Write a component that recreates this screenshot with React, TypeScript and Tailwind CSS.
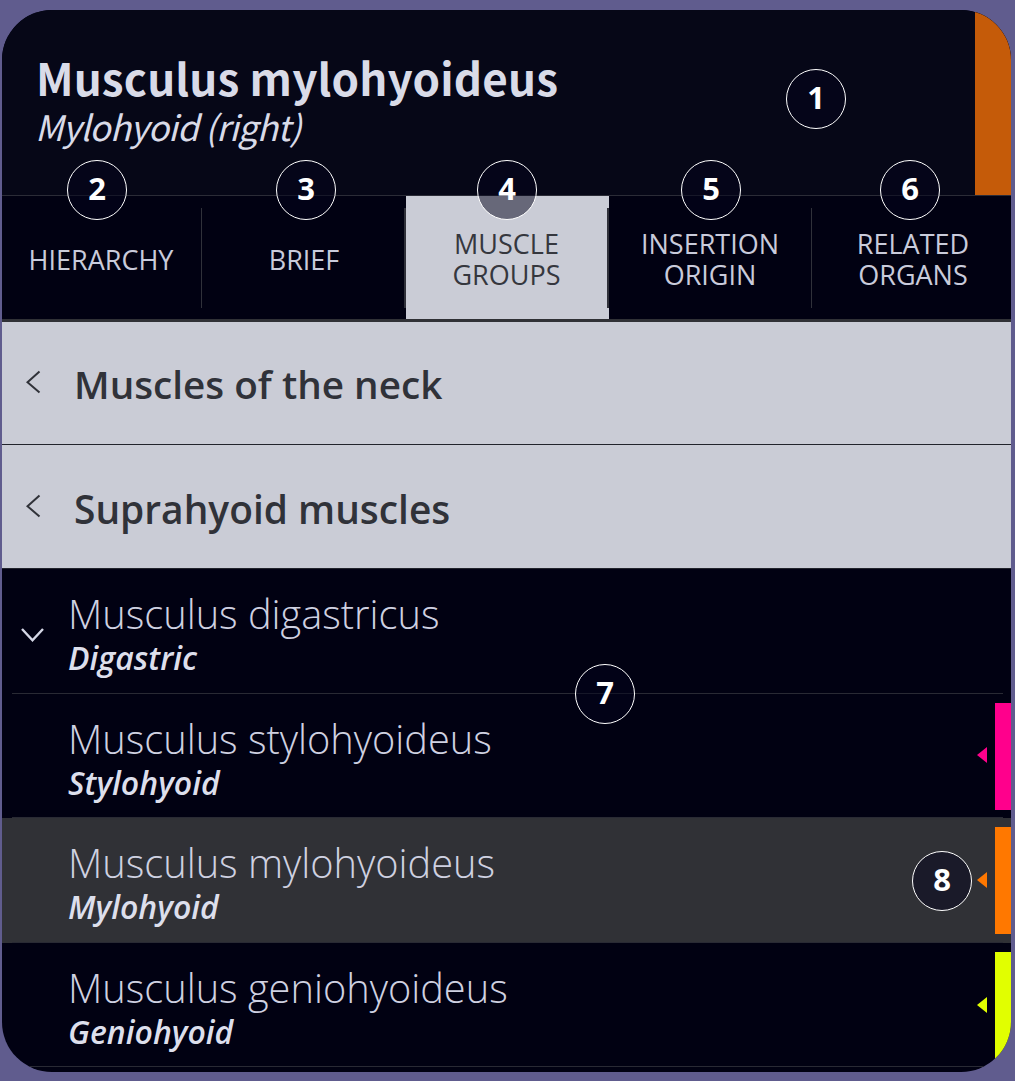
import React from 'react';

interface Tab {
  lines: string[];
  width: string;
  active?: boolean;
  divider?: string;
}

interface Muscle {
  latin: string;
  english: string;
  expandable?: boolean;
  selected?: boolean;
  bar?: string;
  arrow?: string;
}

const tabs: Tab[] = [
  { lines: ['HIERARCHY'], width: 'w-[200px] pr-[2px] pt-px', divider: 'w-px' },
  { lines: ['BRIEF'], width: 'w-[204px] pt-px', divider: 'w-[2px]' },
  { lines: ['MUSCLE', 'GROUPS'], width: 'w-[203px] pr-[2px]', active: true, divider: 'w-[2px]' },
  { lines: ['INSERTION', 'ORIGIN'], width: 'w-[203px] pr-px', divider: 'w-px' },
  { lines: ['RELATED', 'ORGANS'], width: 'w-[199px] pl-[3px]' },
];

const groups = ['Muscles of the neck', 'Suprahyoid muscles'];

const muscles: Muscle[] = [
  { latin: 'Musculus digastricus', english: 'Digastric', expandable: true },
  { latin: 'Musculus stylohyoideus', english: 'Stylohyoid', bar: 'bg-[#ff008c]', arrow: 'text-[#ff008c]' },
  { latin: 'Musculus mylohyoideus', english: 'Mylohyoid', selected: true, bar: 'bg-[#ff7800]', arrow: 'text-[#ff7800]' },
  { latin: 'Musculus geniohyoideus', english: 'Geniohyoid', bar: 'bg-[#e1ff00]', arrow: 'text-[#e1ff00]' },
];

// Numbered callouts float over the panel
const callouts = [
  { n: 1, pos: 'left-[786px] top-[69px]' },
  { n: 2, pos: 'left-[67px] top-[160px]' },
  { n: 3, pos: 'left-[276px] top-[160px]' },
  { n: 4, pos: 'left-[477px] top-[160px]' },
  { n: 5, pos: 'left-[681px] top-[160px]' },
  { n: 6, pos: 'left-[880px] top-[160px]' },
  { n: 7, pos: 'left-[575px] top-[664px]' },
  { n: 8, pos: 'left-[912px] top-[851px]' },
];

const Header = () => (
  <header className="flex h-[186px] justify-between border-b border-[#2b2c37] bg-[#060717]">
    <div className="pl-[34px] pt-[41px] font-['Noto_Sans_CJK_SC',sans-serif] text-[#d9dbe8]">
      <h1 className="whitespace-nowrap text-[44px] font-bold leading-[52px] tracking-[0.15px]">Musculus mylohyoideus</h1>
      <p className="-ml-px whitespace-nowrap text-[35px] font-normal italic leading-[46px] tracking-[-0.75px]">Mylohyoid (right)</p>
    </div>
    <div className="w-9 bg-[#c55b09]" />
  </header>
);

const TabBar = () => (
  <nav className="flex h-[126px] border-b-[3px] border-[#303136]">
    {tabs.map((tab) => (
      <div key={tab.lines[0]} className={`relative flex shrink-0 items-center justify-center ${tab.width} ${tab.active ? 'bg-[#caccd6] text-[#35373e]' : 'text-[#c9cbdb]'}`}>
        <div className="pt-[2px] text-center text-[27px] leading-[31px]">
          {tab.lines.map((line) => (
            <div key={line}>{line}</div>
          ))}
        </div>
        {tab.divider && <div className={`absolute right-0 top-3 h-[100px] bg-[#30313a] ${tab.divider}`} />}
      </div>
    ))}
  </nav>
);

const App: React.FC = () => {
  return (
    <div className="relative h-[1081px] w-[1015px] overflow-hidden bg-[#605c8e] pl-[2px] pt-[10px] font-['Open_Sans',sans-serif]">
      <main className="h-[1062px] w-[1009px] overflow-hidden rounded-[50px] bg-[#010112]">
        <Header />
        <TabBar />

        {groups.map((group, i) => (
          <div key={group} className={`flex items-center border-b border-[#22242c] bg-[#caccd6] text-[#303239] ${i === 0 ? 'h-[123px]' : 'h-[124px]'}`}>
            <svg className="ml-6 mb-[2px] h-6 w-4" viewBox="0 0 16 24" fill="none" stroke="currentColor" strokeWidth="2">
              <path d="M13.5 1.5 L1.5 12.2 L13.5 22.5" />
            </svg>
            <h2 className={`ml-[32px] whitespace-nowrap font-semibold leading-[52px] ${i === 0 ? 'mt-[2px] text-[38.7px]' : 'mt-[4px] text-[38.9px]'}`}>{group}</h2>
          </div>
        ))}

        {muscles.map((m) => (
          <div key={m.latin} className={`flex h-[124.6px] ${m.selected ? 'bg-[#303136]' : ''}`}>
            <div className="ml-[10px] flex w-[991px] shrink-0 border-b border-[#292a34]">
              <div className="flex w-[56px] items-center pl-[8px] pt-2">
                {m.expandable && (
                  <svg className="h-4 w-6 text-[#d5d7e6]" viewBox="0 0 24 16" fill="none" stroke="currentColor" strokeWidth="2.4">
                    <path d="M2 2 L12.5 13.2 L23 2" />
                  </svg>
                )}
              </div>
              <div className="whitespace-nowrap pt-[19px] text-[#cfd1e1]">
                <div className="text-[39.75px] font-light leading-[52px]">{m.latin}</div>
                <div className="text-[32px] font-semibold italic leading-[36px] text-[#dddfec]">{m.english}</div>
              </div>
              {m.bar && (
                <div className="-mr-2 ml-auto flex items-center">
                  <svg className={`mr-2 h-4 w-[10px] ${m.arrow}`} viewBox="0 0 10 16" fill="currentColor">
                    <path d="M10 0 V16 L0 8 Z" />
                  </svg>
                  <div className={`mt-[9px] h-[107px] w-4 self-start ${m.bar}`} />
                </div>
              )}
            </div>
          </div>
        ))}
      </main>

      {callouts.map((c) => (
        <div key={c.n} className={`absolute flex h-[60px] w-[60px] items-center justify-center rounded-full border border-white bg-[#04041c]/50 pb-1 text-[31px] font-bold leading-none text-white ${c.pos}`}>
          {c.n}
        </div>
      ))}
    </div>
  );
};

export default App;
